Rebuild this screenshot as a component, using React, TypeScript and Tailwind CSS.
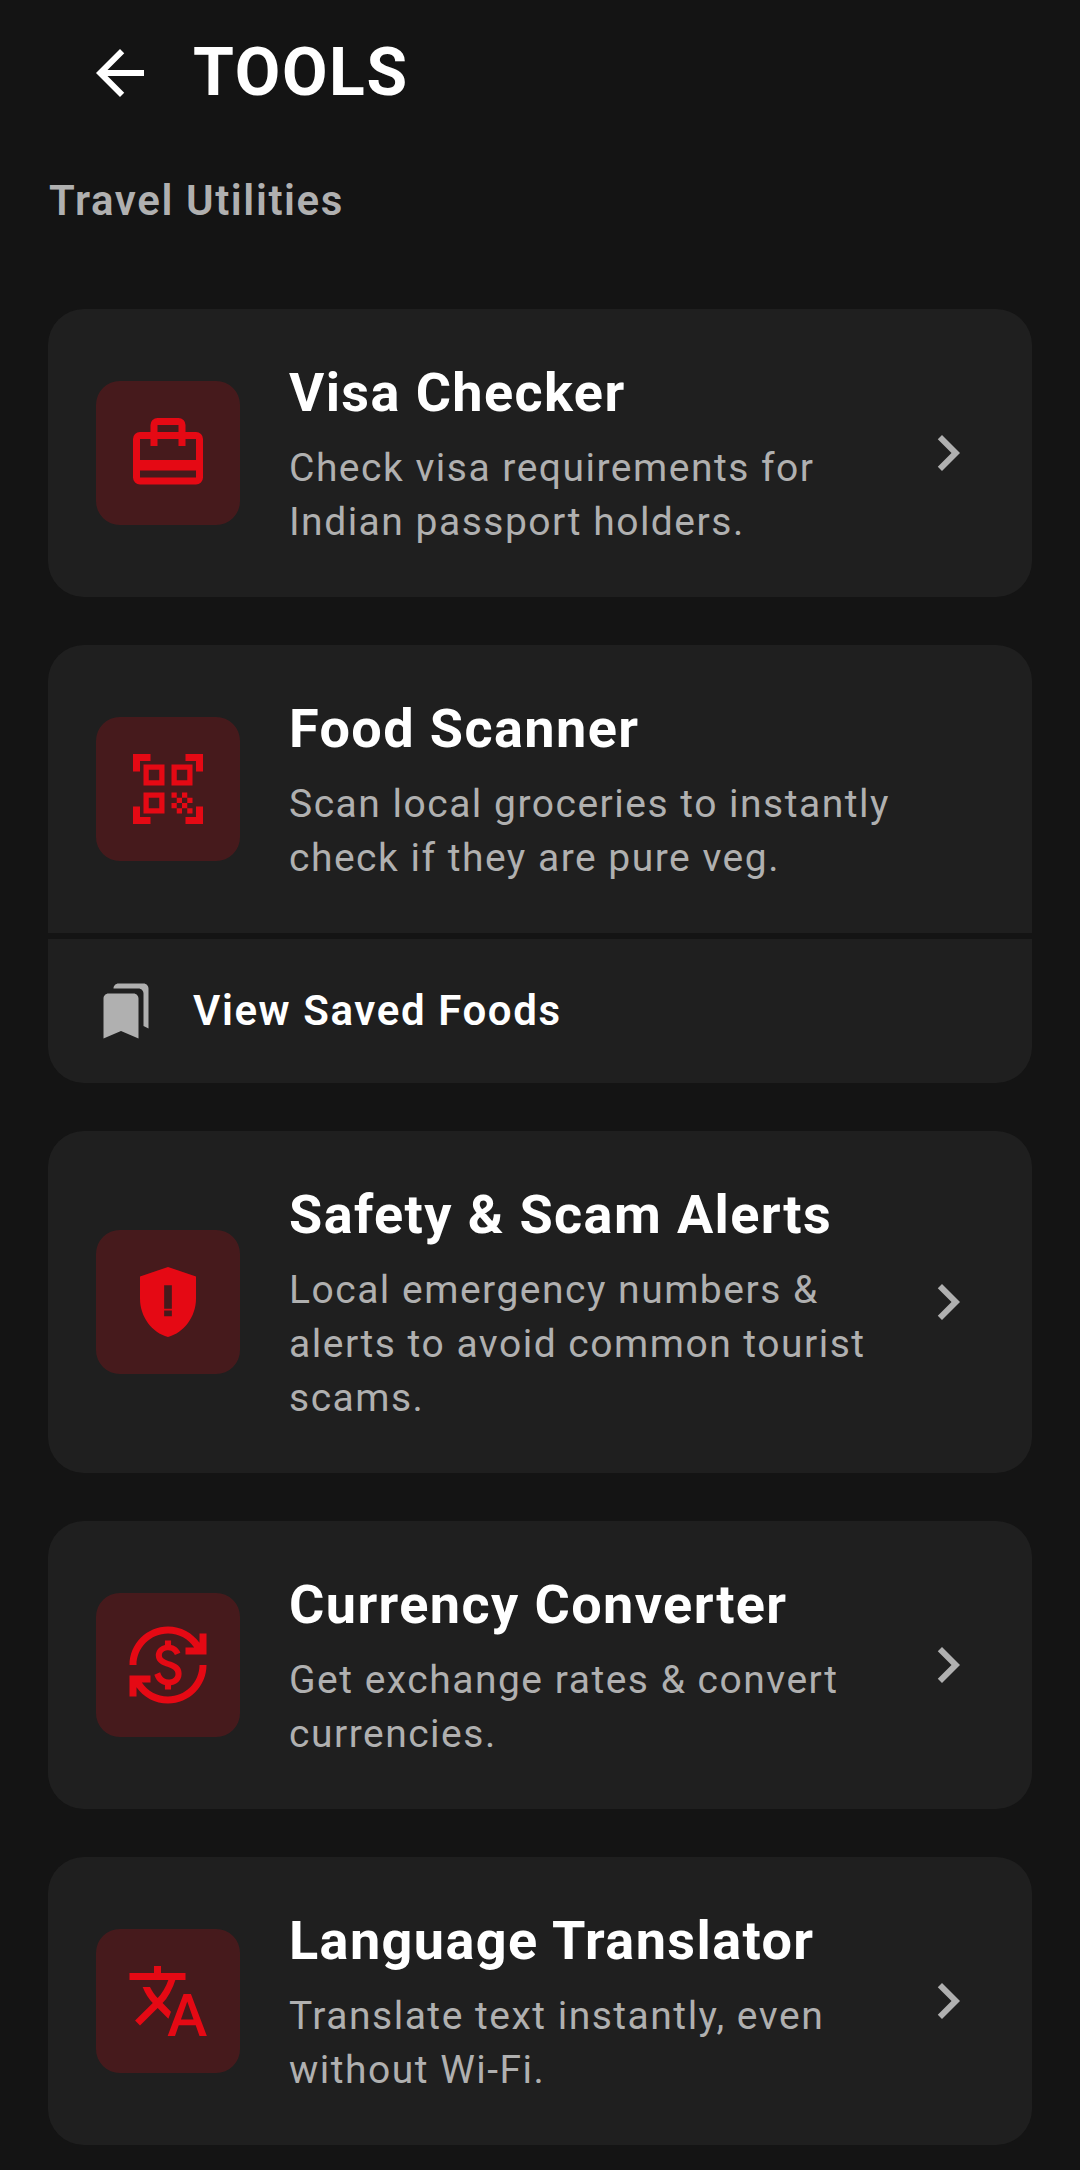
import { ReactNode } from 'react'

const icons = {
  visa: (
    <>
      <path
        fillRule="evenodd"
        d="M4 6h16a2 2 0 0 1 2 2v11a2 2 0 0 1-2 2H4a2 2 0 0 1-2-2V8a2 2 0 0 1 2-2zM4 8v6h16V8zM4 17v2h16v-2z"
      />
      <path d="M7 6V4a2 2 0 0 1 2-2h6a2 2 0 0 1 2 2v6h-2V4H9v6H7z" />
    </>
  ),
  scan: (
    <path d="M9.5 6.5v3h-3v-3h3M11 5H5v6h6V5zm-1.5 9.5v3h-3v-3h3M11 13H5v6h6v-6zm6.5-6.5v3h-3v-3h3M19 5h-6v6h6V5zm-6 8h1.5v1.5H13V13zm1.5 1.5H16V16h-1.5v-1.5zM16 13h1.5v1.5H16V13zm-3 3h1.5v1.5H13V16zm1.5 1.5H16V19h-1.5v-1.5zM16 16h1.5v1.5H16V16zm1.5-1.5H19V16h-1.5v-1.5zm0 3H19V19h-1.5v-1.5zM22 7h-2V4h-3V2h5v5zm0 15v-5h-2v3h-3v2h5zM2 22h5v-2H4v-3H2v5zM2 2v5h2V4h3V2H2z" />
  ),
  shield: (
    <path d="M12 2L4 4.700v6.390c0 5.050 3.410 9.760 8 10.910 4.590-1.150 8-5.860 8-10.910V4.700l-8-2.700zM13.100 16.100h-2.200v-1.700h2.200zM13.100 13.900h-2.200V7.200h2.200z" />
  ),
  currency: (
    <path d="M12.89 11.1c-1.78-.59-2.64-.96-2.64-1.9 0-1.02 1.11-1.39 1.81-1.39 1.31 0 1.79.99 1.9 1.34l1.58-.67c-.15-.44-.82-1.91-2.66-2.23V5h-1.75v1.26c-2.6.56-2.62 2.85-2.62 2.96 0 2.27 2.25 2.91 3.35 3.31 1.58.56 2.28 1.07 2.28 2.03 0 1.13-1.05 1.61-1.98 1.61-1.82 0-2.34-1.87-2.4-2.09l-1.66.67c.63 2.19 2.28 2.78 3.02 2.96V19h1.75v-1.24c.52-.09 3.02-.59 3.02-3.22.01-1.39-.6-2.61-3-3.44zM3 21H1v-6h6v2H4.52c1.61 2.41 4.36 4 7.48 4 4.97 0 9-4.03 9-9h2c0 6.08-4.92 11-11 11-3.72 0-7.01-1.85-9-4.67V21zm-2-9C1 5.92 5.92 1 12 1c3.72 0 7.01 1.85 9 4.67V3h2v6h-6V7h2.48C17.87 4.59 15.12 3 12 3c-4.97 0-9 4.03-9 9H1z" />
  ),
  translate: (
    <path
      transform="translate(0 24) scale(0.025)"
      fillRule="evenodd"
      d="m476-80 182-480h84L924-80h-84l-43-122H603L560-80h-84ZM628-270h144l-72-204-72 204ZM160-200l-56-56 202-202q-35-35-63.5-80T190-640h84q20 39 40 68t48 58q33-33 68.5-92.5T484-720H40v-80h280v-80h80v80h280v80H564q-21 72-63 148t-83 116l96 98-30 82-122-125-202 201Z"
    />
  ),
}

function IconBox({ children }: { children: ReactNode }) {
  return (
    <div className="flex h-[144px] w-[144px] shrink-0 items-center justify-center rounded-[24px] bg-[#e50914]/20">
      <svg viewBox="0 0 24 24" className="h-[84px] w-[84px] fill-[#e50914]">
        {children}
      </svg>
    </div>
  )
}

function ToolRow({
  icon,
  title,
  desc,
  chevron = true,
}: {
  icon: ReactNode
  title: string
  desc: string
  chevron?: boolean
}) {
  return (
    <div className="flex items-center gap-[49px] p-[48px]">
      <IconBox>{icon}</IconBox>
      <div className="min-w-0 flex-1">
        <h2 className="text-[54px] leading-[72px] font-bold tracking-[1.4px] text-white">{title}</h2>
        <p className="mt-[12px] text-[39px] leading-[54px] tracking-[1.5px] text-[#b0b0b0]">{desc}</p>
      </div>
      {chevron && (
        <svg viewBox="0 0 24 24" className="-ml-[24px] h-[72px] w-[72px] shrink-0 fill-[#b0b0b0]">
          <path d="M10 6L8.59 7.41 13.17 12l-4.58 4.59L10 18l6-6z" />
        </svg>
      )}
    </div>
  )
}

export default function App() {
  return (
    <div className="h-[2170px] overflow-hidden bg-[#141414] [font-family:Roboto,sans-serif]">
      {/* header */}
      <div className="flex items-center gap-[37px] pt-[37px] pl-[84px]">
        <svg viewBox="0 0 24 24" className="h-[72px] w-[72px] fill-white">
          <path d="M20 11H7.83l5.59-5.59L12 4l-8 8 8 8 1.41-1.41L7.83 13H20v-2z" />
        </svg>
        <h1 className="text-[66px] leading-[72px] font-bold tracking-[1.7px] text-white">TOOLS</h1>
      </div>

      <p className="mt-[65px] pl-[49px] text-[42px] leading-[54px] font-semibold tracking-[1.6px] text-[#b0b0b0]">
        Travel Utilities
      </p>

      <div className="mt-[81px] flex flex-col gap-[48px] px-[48px]">
        <div className="rounded-[36px] bg-[#1f1f1f]">
          <ToolRow
            icon={icons.visa}
            title="Visa Checker"
            desc="Check visa requirements for Indian passport holders."
          />
        </div>

        <div className="rounded-[36px] bg-[#1f1f1f]">
          <ToolRow
            icon={icons.scan}
            title="Food Scanner"
            desc="Scan local groceries to instantly check if they are pure veg."
            chevron={false}
          />
          <div className="h-[6px] bg-[#141414]" />
          <div className="flex h-[144px] items-center gap-[37px] pl-[48px]">
            <svg viewBox="0 0 24 24" className="h-[60px] w-[60px] fill-[#b0b0b0]">
              <path d="M19 18l2 1V3c0-1.100-.9-2-2-2H8.990C7.890 1 7 1.900 7 3h10c1.100 0 2 .9 2 2v13zM15 5H5c-1.100 0-2 .9-2 2v16l7-3 7 3V7c0-1.100-.9-2-2-2z" />
            </svg>
            <span className="-mt-[2px] text-[42px] font-semibold tracking-[1.6px] text-white">View Saved Foods</span>
          </div>
        </div>

        <div className="rounded-[36px] bg-[#1f1f1f]">
          <ToolRow
            icon={icons.shield}
            title="Safety & Scam Alerts"
            desc="Local emergency numbers & alerts to avoid common tourist scams."
          />
        </div>

        <div className="rounded-[36px] bg-[#1f1f1f]">
          <ToolRow
            icon={icons.currency}
            title="Currency Converter"
            desc="Get exchange rates & convert currencies."
          />
        </div>

        <div className="rounded-[36px] bg-[#1f1f1f]">
          <ToolRow
            icon={icons.translate}
            title="Language Translator"
            desc="Translate text instantly, even without Wi-Fi."
          />
        </div>
      </div>
    </div>
  )
}
